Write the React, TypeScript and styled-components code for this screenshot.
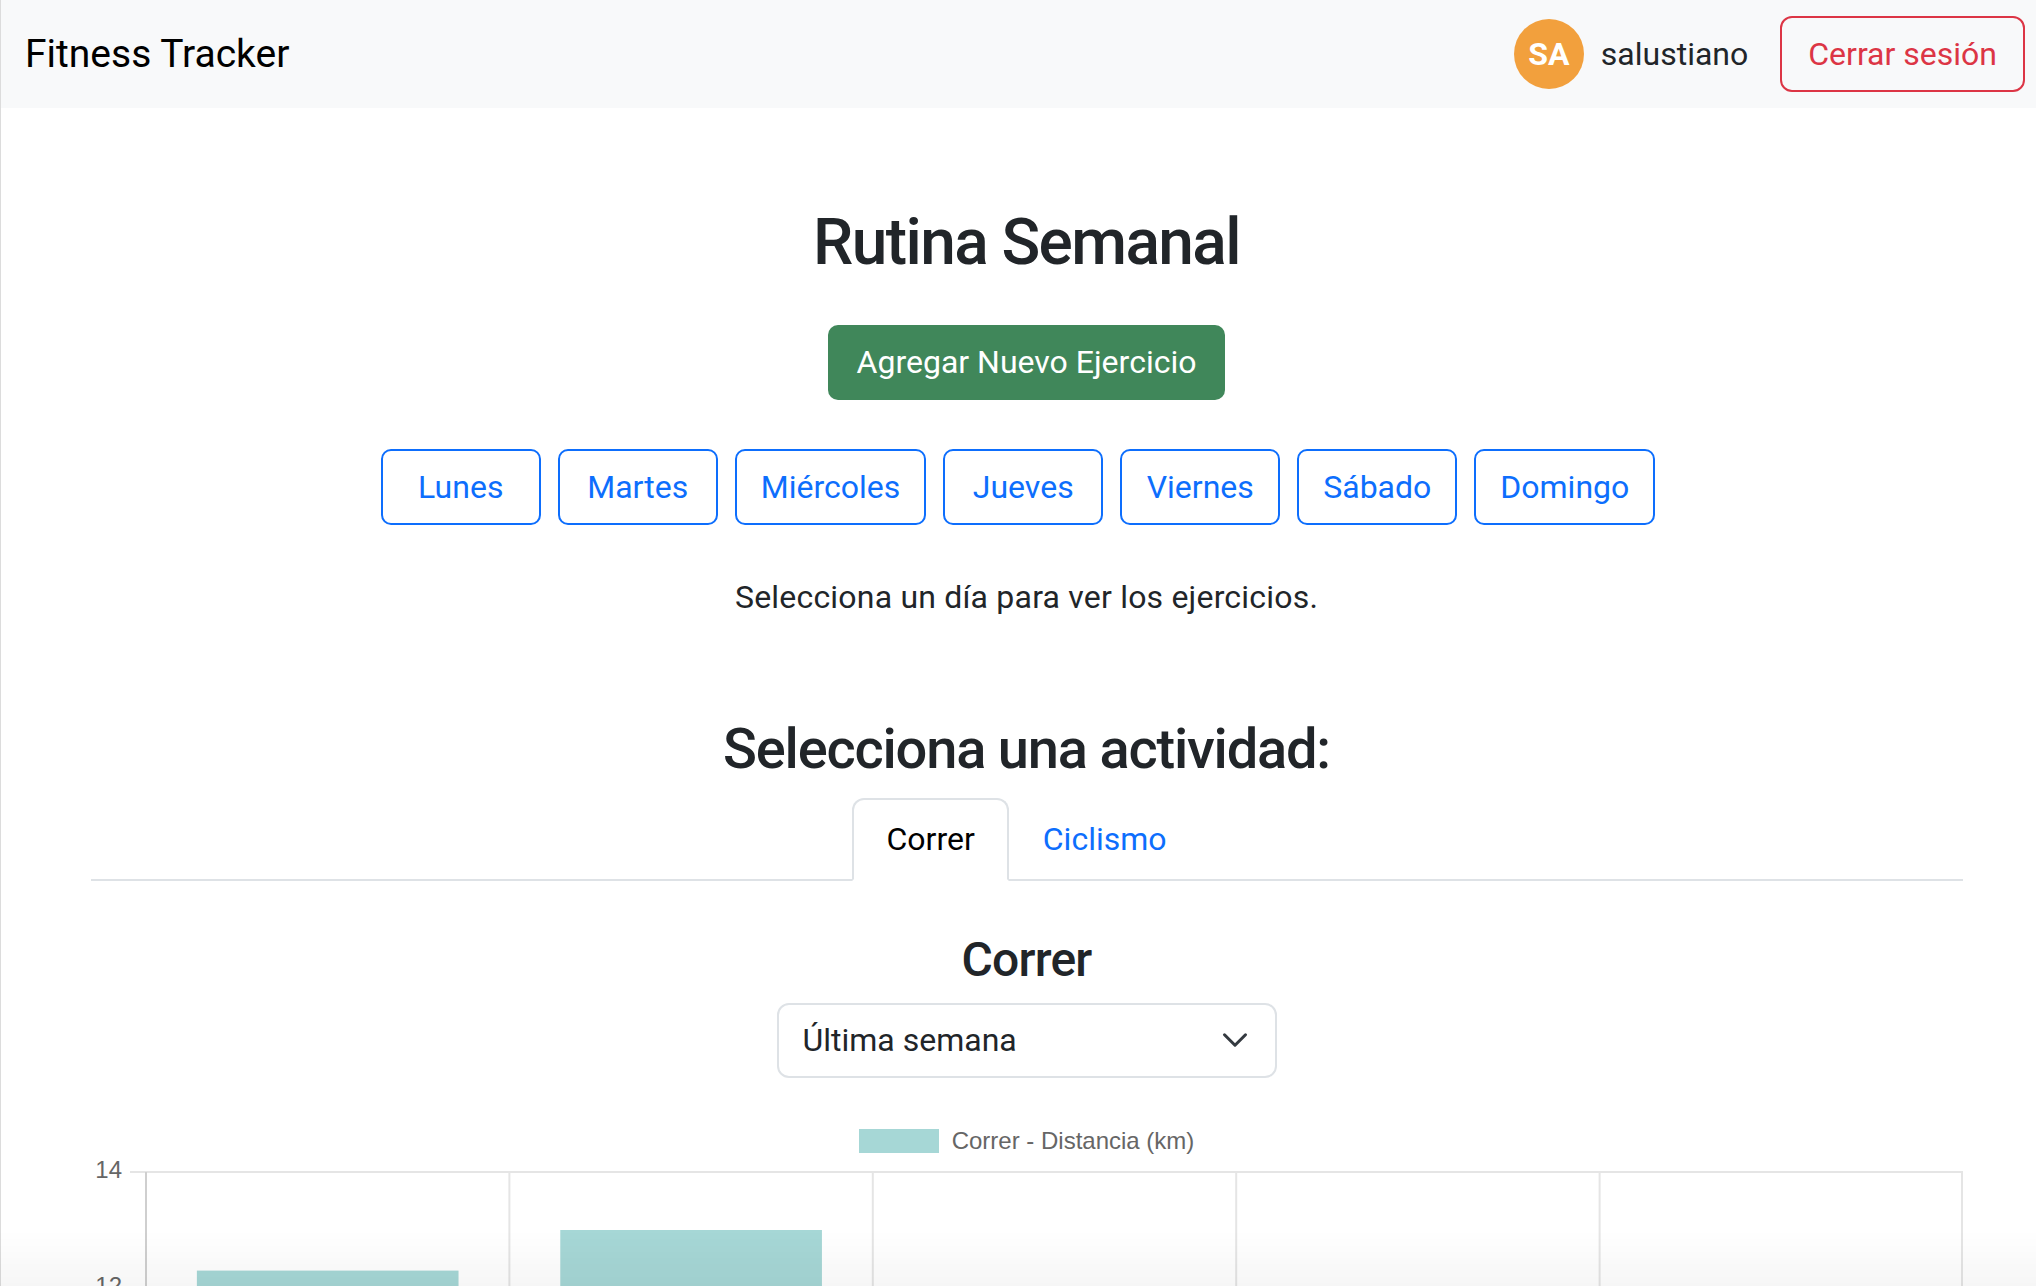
import React from 'react'
import styled, { createGlobalStyle } from 'styled-components'

const GlobalStyle = createGlobalStyle`
  html, body {
    margin: 0;
    padding: 0;
    background: #fff;
  }
  body {
    font-family: Roboto, "Noto Sans", sans-serif;
    color: #212529;
    border-left: 1px solid #dcdcdc;
  }
  * {
    box-sizing: border-box;
  }
`

const Navbar = styled.nav`
  height: 108px;
  background: #f8f9fa;
  display: flex;
  align-items: center;
  justify-content: space-between;
  padding: 0 11px 0 24px;
`

const Brand = styled.a`
  font-size: 39px;
  color: #000;
  text-decoration: none;
`

const UserArea = styled.div`
  display: flex;
  align-items: center;
`

const Avatar = styled.div`
  width: 70px;
  height: 70px;
  border-radius: 50%;
  background: #f2a03d;
  color: #fff;
  font-weight: 700;
  font-size: 32px;
  display: flex;
  align-items: center;
  justify-content: center;
  margin-right: 17px;
`

const UserName = styled.span`
  font-size: 32px;
  color: #212529;
  margin-right: 32px;
`

const LogoutButton = styled.button`
  height: 76px;
  padding: 0 26px;
  border: 2px solid #dc3545;
  border-radius: 12px;
  background: transparent;
  color: #dc3545;
  font-size: 32px;
  font-family: inherit;
`

const Main = styled.main`
  padding-left: 16px;
`

const Container = styled.div`
  width: 1920px;
  margin: 0 auto;
  padding: 0 24px;
  display: flex;
  flex-direction: column;
  align-items: center;
  text-align: center;
`

const Title = styled.h2`
  font-size: 64px;
  font-weight: 500;
  line-height: 1.2;
  letter-spacing: -1.6px;
  margin: 97px 0 0;
`

const AddButton = styled.button`
  margin-top: 43px;
  height: 75px;
  padding: 0 29px;
  border: none;
  border-radius: 10px;
  background: #40875a;
  color: #fff;
  font-size: 32px;
  font-family: inherit;
`

const DayRow = styled.div`
  margin-top: 49px;
  display: flex;
`

const DayButton = styled.button`
  height: 76px;
  min-width: 160px;
  margin-right: 17px;
  padding: 0 24px;
  border: 2px solid #0d6efd;
  border-radius: 10px;
  background: transparent;
  color: #0d6efd;
  font-size: 32px;
  font-family: inherit;
`

const Hint = styled.p`
  margin: 48px 0 0;
  font-size: 32px;
  line-height: 48px;
  letter-spacing: 0.2px;
`

const SectionTitle = styled.h3`
  font-size: 56px;
  font-weight: 500;
  line-height: 1.2;
  letter-spacing: -1.2px;
  margin: 95px 0 0;
`

const Tabs = styled.div`
  margin-top: 15px;
  width: 100%;
  display: flex;
  justify-content: center;
  border-bottom: 2px solid #dee2e6;
`

const Tab = styled.div<{ $active?: boolean }>`
  height: 83px;
  margin-bottom: -2px;
  padding: 0 32px;
  display: flex;
  align-items: center;
  font-size: 32px;
  color: ${({ $active }) => ($active ? '#000' : '#0d6efd')};
  background: ${({ $active }) => ($active ? '#fff' : 'transparent')};
  border: 2px solid ${({ $active }) => ($active ? '#dee2e6' : 'transparent')};
  border-bottom-color: ${({ $active }) => ($active ? '#fff' : 'transparent')};
  border-radius: 12px 12px 0 0;
`

const ActivityTitle = styled.h4`
  font-size: 48px;
  font-weight: 500;
  line-height: 1.2;
  letter-spacing: -0.8px;
  margin: 50px 0 0;
`

const RangeSelect = styled.div`
  margin-top: 14px;
  width: 500px;
  height: 75px;
  padding: 0 26px 0 24px;
  border: 2px solid #dee2e6;
  border-radius: 12px;
  display: flex;
  align-items: center;
  justify-content: space-between;
  font-size: 32px;
  color: #212529;
`

const Legend = styled.div`
  margin-top: 49px;
  display: flex;
  align-items: center;
  gap: 13px;
  font-family: "Liberation Sans", Arial, sans-serif;
  font-size: 24px;
  color: #666;
`

const LegendSwatch = styled.span`
  width: 80px;
  height: 24px;
  background: #a6d7d6;
`

const ChartSvg = styled.svg`
  margin-top: 3px;
  display: block;
  font-family: "Liberation Sans", Arial, sans-serif;
`

const BottomFade = styled.div`
  position: fixed;
  left: 0;
  right: 0;
  bottom: 0;
  height: 56px;
  pointer-events: none;
  background: linear-gradient(rgba(0, 0, 0, 0), rgba(0, 0, 0, 0.035));
`

const days = ['Lunes', 'Martes', 'Miércoles', 'Jueves', 'Viernes', 'Sábado', 'Domingo']
const distances = [12.3, 13, 8, 5, 10]

function DistanceChart() {
  const width = 1872
  const top = 14
  const unit = 58
  const left = 55
  const col = (width - left) / distances.length
  const bottom = top + 14 * unit
  const ticks = [14, 12, 10, 8, 6, 4, 2, 0]

  return (
    <ChartSvg width={width} height={bottom + 60}>
      {ticks.map((t) => {
        const y = top + (14 - t) * unit
        return (
          <g key={t}>
            <line x1={39} x2={width} y1={y} y2={y} stroke="#e5e5e5" strokeWidth={2} />
            <text x={31} y={y} textAnchor="end" dominantBaseline="middle" fontSize={24} fill="#666">
              {t}
            </text>
          </g>
        )
      })}
      {distances.map((_, i) =>
        i === 0 ? null : (
          <line key={i} x1={left + i * col} x2={left + i * col} y1={top} y2={bottom + 16} stroke="#e5e5e5" strokeWidth={2} />
        )
      )}
      <line x1={width - 1} x2={width - 1} y1={top} y2={bottom + 16} stroke="#e5e5e5" strokeWidth={2} />
      {distances.map((d, i) => (
        <rect
          key={i}
          x={left + i * col + col * 0.14}
          y={top + (14 - d) * unit}
          width={col * 0.72}
          height={d * unit}
          fill="#a6d7d6"
        />
      ))}
      <line x1={left} x2={left} y1={top} y2={bottom} stroke="#cfcfcf" strokeWidth={2} />
    </ChartSvg>
  )
}

export default function App() {
  return (
    <>
      <GlobalStyle />
      <Navbar>
        <Brand href="#">Fitness Tracker</Brand>
        <UserArea>
          <Avatar>SA</Avatar>
          <UserName>salustiano</UserName>
          <LogoutButton>Cerrar sesión</LogoutButton>
        </UserArea>
      </Navbar>
      <Main>
        <Container>
          <Title>Rutina Semanal</Title>
          <AddButton>Agregar Nuevo Ejercicio</AddButton>
          <DayRow>
            {days.map((d) => (
              <DayButton key={d}>{d}</DayButton>
            ))}
          </DayRow>
          <Hint>Selecciona un día para ver los ejercicios.</Hint>
          <SectionTitle>Selecciona una actividad:</SectionTitle>
          <Tabs>
            <Tab $active>Correr</Tab>
            <Tab>Ciclismo</Tab>
          </Tabs>
          <ActivityTitle>Correr</ActivityTitle>
          <RangeSelect>
            <span>Última semana</span>
            <svg width="28" height="28" viewBox="0 0 16 16">
              <path d="m2 5 6 6 6-6" fill="none" stroke="#343a40" strokeWidth="1.75" strokeLinecap="round" strokeLinejoin="round" />
            </svg>
          </RangeSelect>
          <Legend>
            <LegendSwatch />
            Correr - Distancia (km)
          </Legend>
          <DistanceChart />
        </Container>
      </Main>
      <BottomFade />
    </>
  )
}
